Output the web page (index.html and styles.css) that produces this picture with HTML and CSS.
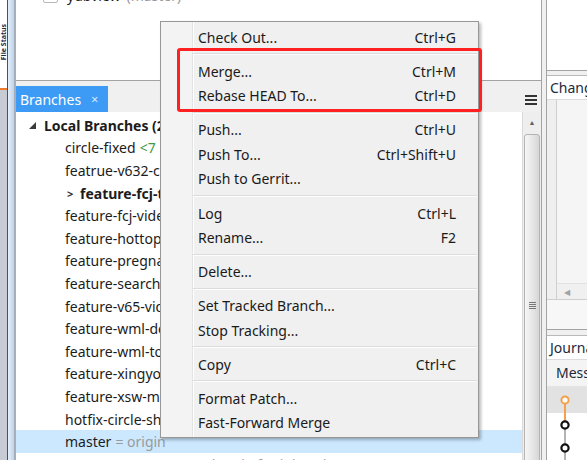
FILE: index.html
```html
<!DOCTYPE html>
<html>
<head>
<meta charset="utf-8">
<title>Branches</title>
<link rel="stylesheet" href="styles.css">
</head>
<body>
<div class="app">
  <div class="sidebar">
    <div class="side-tabs">
      <div class="side-top"><span class="vtext">File Status</span></div>
      <div class="side-bottom"></div>
    </div>
    <div class="side-line"></div>
    <div class="side-glass"></div>
    <div class="side-edge"></div>
  </div>

  <div class="main">
    <div class="top-pane">
      <div class="repo-row"><span class="check"></span><span class="repo">ydbview</span><span class="muted">(master)</span></div>
    </div>
    <div class="tabbar">
      <div class="tab">Branches<span class="tab-x">×</span></div>
      <div class="hamburger"><span></span><span></span><span></span></div>
    </div>
    <div class="branches">
      <ul class="tree">
        <li class="row head"><svg class="tri" width="7" height="7" viewBox="0 0 7 7"><polygon points="7,0 7,7 0,7" fill="#3a3a3a"/></svg><b>Local Branches (21)</b></li>
        <li class="row">circle-fixed <span class="ahead">&lt;7</span></li>
        <li class="row">featrue-v632-circle</li>
        <li class="row current"><span class="cur">&gt;</span><b>feature-fcj-topic</b></li>
        <li class="row">feature-fcj-video</li>
        <li class="row">feature-hottopic</li>
        <li class="row">feature-pregnancy</li>
        <li class="row">feature-search</li>
        <li class="row">feature-v65-video</li>
        <li class="row">feature-wml-dev</li>
        <li class="row">feature-wml-topic</li>
        <li class="row">feature-xingyou</li>
        <li class="row">feature-xsw-msg</li>
        <li class="row">hotfix-circle-share</li>
        <li class="row selected">master <span class="muted">= origin</span></li>
        <li class="row next"><span class="muted">ahead of origin/release</span></li>
      </ul>
      <div class="vscroll">
        <div class="vs-btn">▲</div>
        <div class="vs-thumb"><span class="grip"></span></div>
      </div>
    </div>
  </div>

  <div class="gap"></div>

  <div class="right">
    <div class="r-top"></div>
    <div class="r-gap"></div>
    <div class="r-tab">Changes</div>
    <div class="r-body">
      <div class="r-table">
        <div class="r-strip"></div>
        <div class="r-area">
          <div class="r-fill"></div>
          <div class="r-hscroll">◀</div>
        </div>
      </div>
      <div class="r-foot"></div>
    </div>
    <div class="r-gap2"></div>
    <div class="r-tab">Journal</div>
    <div class="j-head">Message</div>
    <div class="j-row first">
      <svg width="12" height="26" viewBox="0 0 12 26"><line x1="6" y1="17" x2="6" y2="26" stroke="#f4a04c" stroke-width="2"/><circle cx="6" cy="13" r="3.6" fill="#fff" stroke="#f4a04c" stroke-width="2"/></svg>
    </div>
    <div class="j-row">
      <svg width="12" height="24" viewBox="0 0 12 24"><line x1="6" y1="0" x2="6" y2="8" stroke="#f4a04c" stroke-width="2"/><line x1="6" y1="16" x2="6" y2="24" stroke="#b4b4b4" stroke-width="2"/><circle cx="6" cy="12" r="3.6" fill="#fff" stroke="#111" stroke-width="2.2"/></svg>
    </div>
    <div class="j-row">
      <svg width="12" height="24" viewBox="0 0 12 24"><line x1="6" y1="0" x2="6" y2="24" stroke="#b4b4b4" stroke-width="2"/><circle cx="6" cy="11" r="3.6" fill="#fff" stroke="#111" stroke-width="2.2"/></svg>
    </div>
  </div>
</div>

<div class="menu">
  <div class="mi"><span>Check Out...</span><span>Ctrl+G</span></div>
  <div class="sep"></div>
  <div class="mi"><span>Merge...</span><span>Ctrl+M</span></div>
  <div class="mi"><span>Rebase HEAD To...</span><span>Ctrl+D</span></div>
  <div class="sep"></div>
  <div class="mi"><span>Push...</span><span>Ctrl+U</span></div>
  <div class="mi"><span>Push To...</span><span>Ctrl+Shift+U</span></div>
  <div class="mi"><span>Push to Gerrit...</span><span></span></div>
  <div class="sep"></div>
  <div class="mi"><span>Log</span><span>Ctrl+L</span></div>
  <div class="mi"><span>Rename...</span><span>F2</span></div>
  <div class="sep"></div>
  <div class="mi"><span>Delete...</span><span></span></div>
  <div class="sep"></div>
  <div class="mi"><span>Set Tracked Branch...</span><span></span></div>
  <div class="mi"><span>Stop Tracking...</span><span></span></div>
  <div class="sep"></div>
  <div class="mi"><span>Copy</span><span>Ctrl+C</span></div>
  <div class="sep"></div>
  <div class="mi"><span>Format Patch...</span><span></span></div>
  <div class="mi"><span>Fast-Forward Merge</span><span></span></div>
</div>

<div class="highlight"></div>
</body>
</html>
```

FILE: styles.css
```css
* { box-sizing: border-box; margin: 0; padding: 0; }

html, body {
  width: 587px;
  height: 460px;
  overflow: hidden;
}

body {
  position: relative;
  font-family: "Noto Sans", "Liberation Sans", sans-serif;
  font-size: 14px;
  color: #1c1c1c;
  background: #f0f0f0;
}

.app {
  display: flex;
  height: 460px;
}

/* ---------- left strip ---------- */
.sidebar {
  width: 16px;
  flex: none;
  display: flex;
}
.side-tabs {
  width: 7px;
  display: flex;
  flex-direction: column;
}
.side-top {
  height: 90px;
  background: #fff;
  border-bottom: 2px solid #ee7a2c;
  overflow: hidden;
  padding-top: 24px;
}
.vtext {
  display: block;
  writing-mode: vertical-rl;
  transform: rotate(180deg);
  font-size: 7px;
  line-height: 7px;
  color: #1e2a3c;
  font-weight: bold;
  white-space: nowrap;
}
.side-bottom {
  flex: 1;
  background: #c7cbd3;
}
.side-line {
  width: 1px;
  background: #4c525a;
}
.side-glass {
  width: 6px;
  background: linear-gradient(to right, #e6eff9, #bcd3ec);
}
.side-edge {
  width: 2px;
  background: #a7aeb8;
}

/* ---------- main column ---------- */
.main {
  width: 526px;
  flex: none;
  display: flex;
  flex-direction: column;
}

.top-pane {
  height: 81px;
  flex: none;
  background: #fff;
  border-bottom: 1px solid #a3a3a3;
  border-right: 1px solid #a3a3a3;
  overflow: hidden;
  padding-left: 27px;
}
.repo-row {
  display: flex;
  align-items: center;
  height: 22px;
  margin-top: -16px;
}
.check {
  width: 15px;
  height: 15px;
  border: 1px solid #b8b8b8;
  border-radius: 2px;
  background: #fff;
  margin-right: 9px;
}
.repo { color: #1c1c1c; }
.muted { color: #9a9a9a; }
.repo + .muted { margin-left: 6px; }

.tabbar {
  height: 31px;
  flex: none;
  display: flex;
  justify-content: space-between;
  align-items: flex-end;
  border-right: 1px solid #a3a3a3;
}
.tab {
  width: 92px;
  height: 26px;
  background: #3d9bf6;
  color: #fff;
  display: flex;
  align-items: center;
  padding-left: 4px;
}
.tab-x {
  margin-left: 10px;
  font-size: 13px;
  color: #d4e7fc;
}
.hamburger {
  align-self: flex-start;
  margin-top: 14px;
  margin-right: 4px;
  width: 12px;
  display: flex;
  flex-direction: column;
  gap: 2.5px;
}
.hamburger span {
  display: block;
  height: 1.5px;
  background: #333;
}

.branches {
  flex: 1;
  min-height: 0;
  display: flex;
  background: #fff;
  border-right: 1px solid #a3a3a3;
  overflow: hidden;
}

.tree {
  flex: 1;
  list-style: none;
  padding-top: 2px;
  overflow: hidden;
}
.row {
  height: 22.6px;
  display: flex;
  align-items: center;
  padding-left: 49px;
  white-space: nowrap;
}
.row.head { padding-left: 13px; }
.tri { margin-right: 8px; margin-top: 1px; }
.row b { font-weight: 700; }
.ahead { color: #3f9a45; margin-left: 4px; }
.cur {
  width: 15px;
  padding-left: 2px;
  font-size: 11px;
  font-weight: 700;
  color: #333;
}
.row.selected { background: #cce8ff; }
.row.selected .muted { margin-left: 4px; }
.row.next { padding-left: 188px; }

.vscroll {
  width: 19px;
  flex: none;
  background: #eeeeee;
  border-left: 1px solid #dadada;
  display: flex;
  flex-direction: column;
  align-items: center;
}
.vs-btn {
  height: 22px;
  flex: none;
  font-size: 7px;
  line-height: 22px;
  color: #606060;
}
.vs-thumb {
  width: 16px;
  height: 342px;
  flex: none;
  border: 1px solid #b4b4b4;
  border-radius: 3px;
  background: linear-gradient(to right, #f6f6f6, #e4e4e4 60%, #d6d6d6);
  display: flex;
  align-items: center;
  justify-content: center;
}
.grip {
  width: 7px;
  height: 7px;
  background: repeating-linear-gradient(to bottom, #777 0 1px, transparent 1px 2px);
}

.gap {
  width: 4px;
  flex: none;
}

/* ---------- right column ---------- */
.right {
  width: 41px;
  flex: none;
  border-left: 1px solid #a3a3a3;
  display: flex;
  flex-direction: column;
  overflow: hidden;
  white-space: nowrap;
}
.r-top {
  height: 71px;
  flex: none;
  background: #fff;
  border-bottom: 1px solid #a3a3a3;
}
.r-gap { height: 4px; flex: none; }
.r-gap2 { height: 5px; flex: none; }
.r-tab {
  height: 25px;
  flex: none;
  background: #fff;
  border-top: 1px solid #b8b8b8;
  border-bottom: 1px solid #dcdcdc;
  padding-left: 3px;
  line-height: 23px;
  color: #1c2a3a;
}
.r-body {
  height: 230px;
  flex: none;
  display: flex;
  flex-direction: column;
  border-bottom: 1px solid #a3a3a3;
}
.r-table {
  flex: 1;
  display: flex;
}
.r-strip {
  width: 10px;
  background: #efefef;
  border-right: 1px solid #cfcfcf;
}
.r-area {
  flex: 1;
  display: flex;
  flex-direction: column;
}
.r-fill {
  flex: 1;
  background: #f5f5f5;
}
.r-hscroll {
  height: 16px;
  background: #f0f0f0;
  border-top: 1px solid #e2e2e2;
  font-size: 8px;
  line-height: 15px;
  padding-left: 7px;
  color: #a2a2a2;
}
.r-foot {
  height: 30px;
  background: #f7f7f7;
  border-top: 1px solid #cfcfcf;
}
.j-head {
  height: 27px;
  flex: none;
  background: #f4f4f4;
  border-bottom: 1px solid #e4e4e4;
  padding-left: 9px;
  line-height: 26px;
  color: #1c2a3a;
}
.j-row {
  height: 24px;
  flex: none;
  background: #fff;
  padding-left: 12px;
  display: flex;
}
.j-row.first {
  height: 26px;
  background: #e2e2e2;
}

/* ---------- context menu ---------- */
.menu {
  position: absolute;
  left: 160px;
  top: 21px;
  width: 319px;
  padding: 3px 0 2px;
  border: 1px solid #979797;
  background: linear-gradient(to right, #f3f3f3 0 31px, #e2e3e3 31px 32px, #ffffff 32px 33px, #f0f0f0 33px);
  box-shadow: 2px 2px 3px rgba(0, 0, 0, 0.28);
  color: #1a1a1a;
}
.mi {
  height: 24.5px;
  display: flex;
  justify-content: space-between;
  align-items: center;
  padding: 0 22px 0 37px;
  white-space: nowrap;
}
.sep {
  height: 2px;
  margin: 3.8px 1px 3.8px 32px;
  border-top: 1px solid #dcdcdc;
  border-bottom: 1px solid #fdfdfd;
}

/* ---------- annotation ---------- */
.highlight {
  position: absolute;
  left: 177px;
  top: 48px;
  width: 305px;
  height: 64px;
  border: 3px solid #ff2121;
  border-radius: 3px;
}
```
